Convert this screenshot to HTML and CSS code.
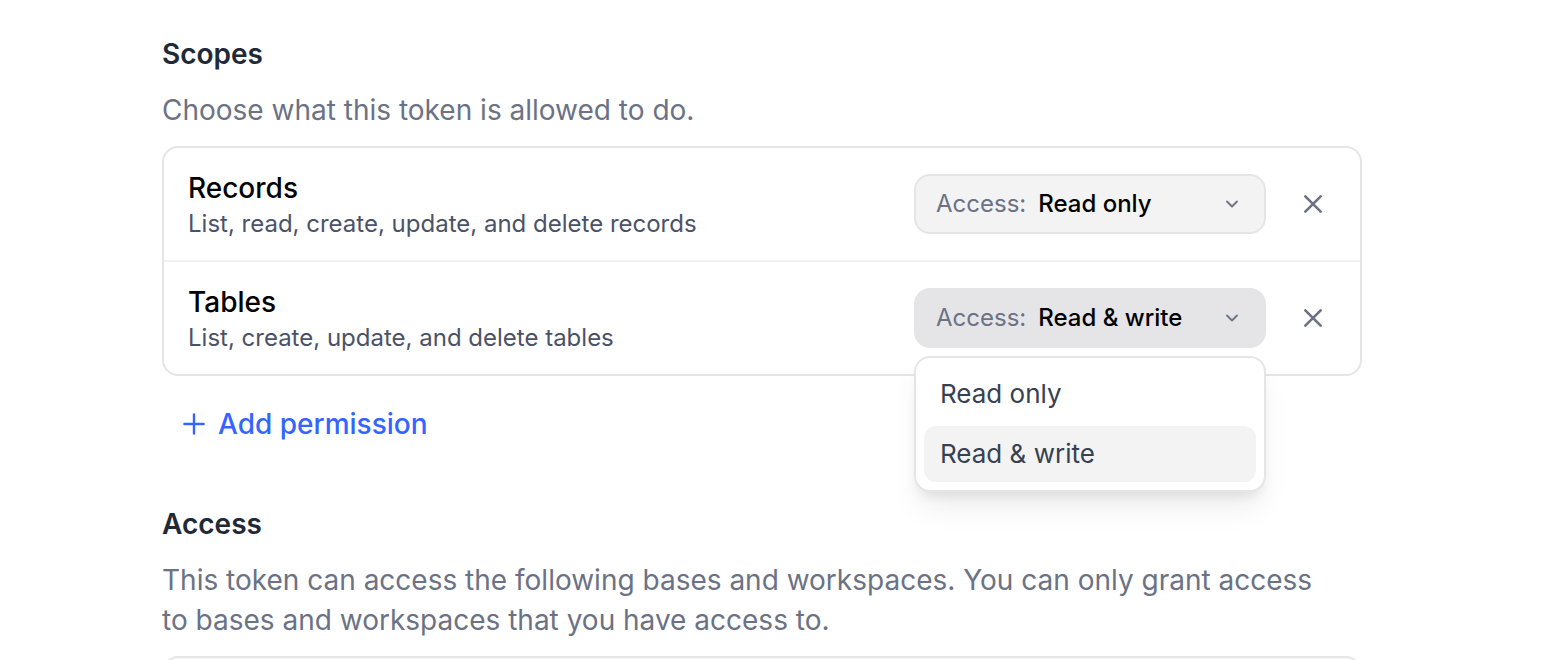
FILE: index.html
```
<!DOCTYPE html>
<html lang="en">
<head>
	<meta charset="utf-8">
	<meta name="viewport" content="width=device-width, initial-scale=1">
	<title>Personal access token</title>
	<link rel="stylesheet" href="styles.css">
</head>
<body>
	<main class="page">
		<section class="section">
			<h2>Scopes</h2>
			<p class="hint">Choose what this token is allowed to do.</p>
			<ul class="card">
				<li class="scope">
					<div class="scope-text">
						<h3>Records</h3>
						<p>List, read, create, update, and delete records</p>
					</div>
					<div class="picker">
						<label for="records-access">Access:</label>
						<select id="records-access">
							<option selected>Read only</option>
							<option>Read &amp; write</option>
						</select>
						<svg class="chevron" width="16" height="16" viewBox="0 0 16 16"><path stroke-width="1.8" d="M3 5.5l5 5 5-5"/></svg>
					</div>
					<button class="remove" type="button" aria-label="Remove Records">
						<svg width="24" height="24" viewBox="0 0 24 24"><path stroke-width="2.6" d="M4.3 4.3l15.4 15.4M19.7 4.3L4.3 19.7"/></svg>
					</button>
				</li>
				<li class="scope">
					<div class="scope-text">
						<h3>Tables</h3>
						<p>List, create, update, and delete tables</p>
					</div>
					<div class="picker open">
						<label for="tables-access">Access:</label>
						<select id="tables-access">
							<option>Read only</option>
							<option selected>Read &amp; write</option>
						</select>
						<svg class="chevron" width="16" height="16" viewBox="0 0 16 16"><path stroke-width="1.8" d="M3 5.5l5 5 5-5"/></svg>
						<div class="menu">
							<button type="button">Read only</button>
							<button class="active" type="button">Read &amp; write</button>
						</div>
					</div>
					<button class="remove" type="button" aria-label="Remove Tables">
						<svg width="24" height="24" viewBox="0 0 24 24"><path stroke-width="2.6" d="M4.3 4.3l15.4 15.4M19.7 4.3L4.3 19.7"/></svg>
					</button>
				</li>
			</ul>
			<button class="add" type="button">
				<svg width="24" height="24" viewBox="0 0 24 24"><path stroke-width="2.4" d="M12 2.4v19.2M2.4 12h19.2"/></svg>
				Add permission
			</button>
		</section>
		<section class="section">
			<h2>Access</h2>
			<p class="hint">This token can access the following bases and workspaces. You can only grant access to bases and workspaces that you have access to.</p>
			<div class="card bases"></div>
		</section>
	</main>
</body>
</html>
```

FILE: styles.css
```
* {
	box-sizing: border-box;
}

body {
	margin: 0;
	background: #fff;
	font-family: Inter, "Liberation Sans", sans-serif;
	font-size: 28px;
	line-height: 40px;
	color: #1f2937;
}

h2, h3, p, ul {
	margin: 0;
	padding: 0;
}

button, select {
	font: inherit;
	color: inherit;
	border: 0;
	padding: 0;
	background: none;
	cursor: pointer;
}

svg {
	flex: none;
	fill: none;
	stroke: currentColor;
	stroke-linecap: round;
	stroke-linejoin: round;
}

.page {
	display: flex;
	flex-direction: column;
	gap: 60px;
	padding: 34px 188px 0 162px;
}

.section h2 {
	font-size: 28px;
	font-weight: 600;
}

.hint {
	margin: 16px 0;
	padding-right: 24px;
	color: #6b7285;
}

.card {
	list-style: none;
	border: 2px solid #e5e5e5;
	border-radius: 16px;
}

.scope {
	display: flex;
	align-items: center;
	gap: 24px;
	padding: 20px 24px;
}

.scope + .scope {
	border-top: 2px solid #f2f2f2;
}

.scope-text {
	flex: 1;
}

.scope h3 {
	font-size: 28px;
	font-weight: 500;
	color: #000;
}

.scope p {
	font-size: 24px;
	line-height: 32px;
	color: #4b5268;
}

.picker {
	position: relative;
	display: flex;
	align-items: center;
	gap: 12px;
	width: 352px;
	height: 60px;
	padding: 0 24px 0 20px;
	border: 2px solid #e5e5e5;
	border-radius: 16px;
	background: #f3f3f3;
	font-size: 24px;
	color: #6b7285;
}

.picker.open {
	background: #e5e5e8;
	border-color: #e5e5e8;
}

.picker select {
	flex: 1;
	min-width: 0;
	appearance: none;
	outline: 0;
	font-weight: 500;
	color: #000;
}

.chevron {
	pointer-events: none;
}

/* opens over whatever sits below the row */
.menu {
	position: absolute;
	z-index: 1;
	top: calc(100% + 10px);
	left: -2px;
	right: -2px;
	display: flex;
	flex-direction: column;
	gap: 4px;
	padding: 8px;
	border: 2px solid #e5e5e5;
	border-radius: 16px;
	background: #fff;
	box-shadow: 0 20px 30px -6px rgba(0, 0, 0, .08), 0 8px 12px -4px rgba(0, 0, 0, .08);
}

.menu button {
	height: 56px;
	padding: 0 16px;
	border-radius: 12px;
	font-size: 26px;
	text-align: left;
	color: #374151;
}

.menu .active {
	background: #f3f3f3;
}

.remove {
	display: flex;
	align-items: center;
	justify-content: center;
	width: 46px;
	height: 46px;
	color: #6b7285;
}

.add {
	display: flex;
	align-items: center;
	gap: 12px;
	margin: 28px 0 0 20px;
	font-weight: 500;
	color: #3366ff;
}

.bases {
	height: 120px;
	background: #fafafa;
}
```
